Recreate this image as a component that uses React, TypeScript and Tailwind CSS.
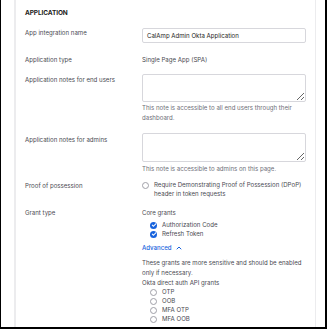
import React from "react";
import { ChevronUp } from "lucide-react";

const font = { fontFamily: "Inter, 'Liberation Sans', sans-serif" };

const Radio = () => (
  <span className="w-[7px] h-[7px] rounded-full border border-[#a0a0a8] bg-white shrink-0" />
);

const Check = () => (
  <span className="w-[7px] h-[7px] rounded-full bg-[#1662dd] shrink-0 grid place-items-center">
    <svg viewBox="0 0 10 10" className="w-[6px] h-[6px]">
      <path d="M2.2 5.2 L4.2 7.1 L7.9 3" fill="none" stroke="white" strokeWidth="1.8" strokeLinecap="round" strokeLinejoin="round" />
    </svg>
  </span>
);

const Row = ({ label, labelPad = "pt-[1px]", children, className = "" }: { label: string; labelPad?: string; children: React.ReactNode; className?: string }) => (
  <div className={`grid grid-cols-[117px_164px] ${className}`}>
    <div className={`text-[#4a4a52] leading-[8px] ${labelPad}`}>{label}</div>
    <div>{children}</div>
  </div>
);

export default function App() {
  const grants = ["OTP", "OOB", "MFA OTP", "MFA OOB"];
  return (
    <div className="w-[327px] h-[329px] overflow-hidden bg-white border-l border-r-2 border-b-2 border-black">
      <div className="ml-[13px] w-[302px] h-full border-l-2 border-r border-[#ececee] pl-[9px] text-[6.1px]" style={font}>
        <div className="pt-[9px] font-bold text-[#1d1d21] text-[6.5px] leading-[8px] tracking-[-0.1px]">APPLICATION</div>

        <Row label="App integration name" labelPad="pt-[1px]" className="mt-[11px]">
          <div className="h-[15px] border border-[#d7d7dc] rounded-[2px] px-[4px] flex items-center text-[#1d1d21]">
            CalAmp Admin Okta Application
          </div>
        </Row>

        <Row label="Application type" className="mt-[12px]">
          <div className="leading-[8px] pt-[1px] text-[#4a4a52]">Single Page App (SPA)</div>
        </Row>

        <Row label="Application notes for end users" labelPad="pt-[2px]" className="mt-[10px]">
          <textarea className="block w-full h-[28px] border border-[#d7d7dc] rounded-[2px]" />
          <div className="text-[#6e6e78] leading-[10px] mt-[1px]">
            This note is accessible to all end users through their dashboard.
          </div>
        </Row>

        <Row label="Application notes for admins" labelPad="pt-[3px]" className="mt-[10px]">
          <textarea className="block w-full h-[29px] border border-[#d7d7dc] rounded-[2px]" />
          <div className="text-[#6e6e78] leading-[10px] mt-[2px]">
            This note is accessible to admins on this page.
          </div>
        </Row>

        <Row label="Proof of possession" labelPad="pt-[2px]" className="mt-[6px]">
          <div className="flex items-start gap-[5px]">
            <span className="mt-[2px] flex"><Radio /></span>
            <div className="leading-[9px] text-[#4a4a52]">
              Require Demonstrating Proof of Possession (DPoP) header in token requests
            </div>
          </div>
        </Row>

        <Row label="Grant type" className="mt-[10px]">
          <div className="leading-[8px] pt-[1px] text-[#4a4a52]">Core grants</div>
          <div className="mt-[4px] pl-[8px] flex flex-col gap-[1px]">
            {["Authorization Code", "Refresh Token"].map((g) => (
              <div key={g} className="flex items-center gap-[5px] leading-[8px] text-[#4a4a52]">
                <Check />
                {g}
              </div>
            ))}
          </div>
          <div className="mt-[6px] flex items-center gap-[3px] text-[#1662dd] font-medium leading-[8px]">
            Advanced
            <ChevronUp className="w-[8px] h-[8px]" strokeWidth={3} />
          </div>
          <div className="mt-[6px] text-[#4a4a52] leading-[10px]">
            These grants are more sensitive and should be enabled only if necessary.
          </div>
          <div className="mt-0 text-[#4a4a52] leading-[10px]">Okta direct auth API grants</div>
          <div className="mt-0 pl-[8px] flex flex-col gap-[1px]">
            {grants.map((g) => (
              <div key={g} className="flex items-center gap-[5px] leading-[8px] text-[#4a4a52]">
                <Radio />
                {g}
              </div>
            ))}
            <div className="leading-[8px] text-[#4a4a52] -ml-[8px] mt-[3px]">Other grants</div>
          </div>
        </Row>
      </div>
    </div>
  );
}
